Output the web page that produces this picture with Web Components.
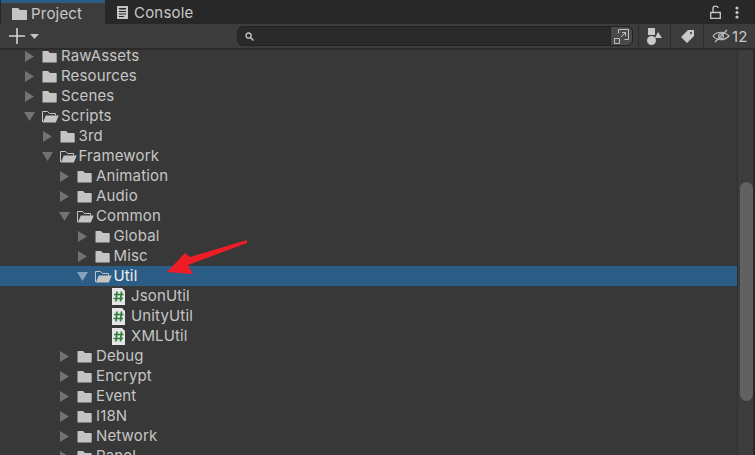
<!DOCTYPE html>
<html>
<head>
<meta charset="utf-8">
<style>
  html, body { margin: 0; padding: 0; background: #383838; }
  body { width: 755px; height: 455px; overflow: hidden; font-family: Inter, "Noto Sans", sans-serif; }
</style>
</head>
<body>
<project-window>
  <tab-bar slot="tabs"></tab-bar>
  <tool-bar slot="tools"></tool-bar>
  <tree-view slot="tree">
    <tree-row depth="0" state="closed">RawAssets</tree-row>
    <tree-row depth="0" state="closed">Resources</tree-row>
    <tree-row depth="0" state="closed">Scenes</tree-row>
    <tree-row depth="0" state="open">Scripts</tree-row>
    <tree-row depth="1" state="closed">3rd</tree-row>
    <tree-row depth="1" state="open">Framework</tree-row>
    <tree-row depth="2" state="closed">Animation</tree-row>
    <tree-row depth="2" state="closed">Audio</tree-row>
    <tree-row depth="2" state="open">Common</tree-row>
    <tree-row depth="3" state="closed">Global</tree-row>
    <tree-row depth="3" state="closed">Misc</tree-row>
    <tree-row depth="3" state="open" selected>Util</tree-row>
    <tree-row depth="4" state="file">JsonUtil</tree-row>
    <tree-row depth="4" state="file">UnityUtil</tree-row>
    <tree-row depth="4" state="file">XMLUtil</tree-row>
    <tree-row depth="2" state="closed">Debug</tree-row>
    <tree-row depth="2" state="closed">Encrypt</tree-row>
    <tree-row depth="2" state="closed">Event</tree-row>
    <tree-row depth="2" state="closed">I18N</tree-row>
    <tree-row depth="2" state="closed">Network</tree-row>
    <tree-row depth="2" state="closed">Panel</tree-row>
  </tree-view>
  <scroll-bar slot="scroll"></scroll-bar>
  <red-arrow slot="overlay"></red-arrow>
</project-window>

<script>
class ProjectWindow extends HTMLElement {
  constructor() {
    super();
    this.attachShadow({ mode: "open" });
    this.shadowRoot.innerHTML = `
      <style>
        :host { display: flex; flex-direction: column; width: 755px; height: 455px; position: relative; overflow: hidden; }
        .body { flex: 1; display: flex; min-height: 0; }
      </style>
      <slot name="tabs"></slot>
      <slot name="tools"></slot>
      <div class="body">
        <slot name="tree"></slot>
        <slot name="scroll"></slot>
      </div>
      <slot name="overlay"></slot>
    `;
  }
}
customElements.define("project-window", ProjectWindow);

class TabBar extends HTMLElement {
  constructor() {
    super();
    this.attachShadow({ mode: "open" });
    this.shadowRoot.innerHTML = `
      <style>
        :host { display: flex; height: 24px; background: #282828; color: #c8c8c8; font-size: 15px; letter-spacing: .2px; flex: none; }
        .tab { display: flex; align-items: center; box-sizing: border-box; height: 24px; }
        .active { width: 104px; padding: 0 0 1px 11px; gap: 4px; background: #3c3c3c; border-top: 3px solid #2c5d87; margin-left: 1px; }
        .other { padding: 1px 0 0 11px; gap: 5px; }
        .right { margin-left: auto; display: flex; align-items: center; gap: 14px; padding-right: 16px; height: 24px; }
        svg { display: block; }
      </style>
      <div class="tab active">
        <svg width="15" height="13" viewBox="0 0 15 13"><path d="M0 1h6l2 2h7v10H0z" fill="#c4c4c4"/></svg>
        <span>Project</span>
      </div>
      <div class="tab other">
        <svg width="13" height="13" viewBox="0 0 13 13"><path fill="#c4c4c4" fill-rule="evenodd" d="M1 0h11v13H1zM3 2v1.500h7V2zM3 5v1h7V5zM3 7.500v1h7v-1zM3 10v1h5v-1z"/></svg>
        <span>Console</span>
      </div>
      <div class="right">
        <svg width="11" height="14" viewBox="0 0 11 14"><path fill="none" stroke="#c8c8c8" stroke-width="1.3" d="M.7 7.500h9.600v5.800H.7zM3 7.300V3.200C3 .4 8 .4 8 3"/></svg>
        <svg width="4" height="13" viewBox="0 0 4 13"><g fill="#c8c8c8"><circle cx="2" cy="2" r="1.6"/><circle cx="2" cy="6.500" r="1.6"/><circle cx="2" cy="11" r="1.6"/></g></svg>
      </div>
    `;
  }
}
customElements.define("tab-bar", TabBar);

class ToolBar extends HTMLElement {
  constructor() {
    super();
    this.attachShadow({ mode: "open" });
    this.shadowRoot.innerHTML = `
      <style>
        :host { display: flex; align-items: center; box-sizing: border-box; height: 26px; flex: none; background: #3c3c3c; border-bottom: 2px solid #2b2b2b; color: #c8c8c8; font-size: 15px; }
        .add { display: flex; align-items: center; gap: 5px; padding-left: 9px; width: 237px; box-sizing: border-box; }
        .search { width: 396px; height: 20px; box-sizing: border-box; background: #2a2a2a; border: 1px solid #212121; border-radius: 6px; display: flex; align-items: center; justify-content: space-between; padding-left: 7px; overflow: hidden; }
        .expand { width: 21px; height: 18px; background: #4a4a4a; display: flex; align-items: center; justify-content: center; border-left: 1px solid #222; }
        .btn { height: 24px; display: flex; align-items: center; justify-content: center; border-left: 1px solid #2c2c2c; box-sizing: border-box; }
        .b1 { margin-left: 5px; width: 32px; }
        .b2 { width: 33px; }
        .b3 { width: 52px; justify-content: flex-start; padding-left: 8px; gap: 2px; letter-spacing: .2px; }
        svg { display: block; }
      </style>
      <div class="add">
        <svg width="16" height="16" viewBox="0 0 16 16"><path d="M8 0v16M0 8h16" stroke="#d2d2d2" stroke-width="1.6"/></svg>
        <svg width="9" height="5" viewBox="0 0 9 5"><path d="M0 0h9L4.500 5z" fill="#c4c4c4"/></svg>
      </div>
      <div class="search">
        <svg width="9" height="9" viewBox="0 0 9 9"><circle cx="3.6" cy="3.6" r="2.6" fill="none" stroke="#c8c8c8" stroke-width="1.3"/><path d="M5.500 5.500 8.500 8.500" stroke="#c8c8c8" stroke-width="1.5"/></svg>
        <div class="expand">
          <svg width="15" height="15" viewBox="0 0 15 15"><g fill="none" stroke="#c0c0c0"><path d="M4.500 4.500V.5h10v10h-4"/><path d="M.5 9.500h5v5h-5z"/><path d="M7 8l4.500-4.500M8 3.500h3.500V7"/></g></svg>
        </div>
      </div>
      <div class="btn b1">
        <svg width="15" height="17" viewBox="0 0 15 17"><g fill="#c8c8c8"><rect x="1" y="0" width="7" height="7"/><circle cx="4.500" cy="12.500" r="4.500"/><path d="M11 4l4 6H8z"/></g></svg>
      </div>
      <div class="btn b2">
        <svg width="13" height="13" viewBox="0 0 13 13"><path fill="#c8c8c8" fill-rule="evenodd" d="M7 0h6v6l-7 7-6-6zM10 2a1 1 0 1 0 .01 0z"/></svg>
      </div>
      <div class="btn b3">
        <svg width="18" height="14" viewBox="0 0 18 14"><g fill="none" stroke="#c0c0c0" stroke-width="1.2"><path d="M1 7c4-5 11-5 16 0-5 5-12 5-16 0z"/><circle cx="9" cy="7" r="2.4"/><path d="M3 13 15 1"/></g></svg>
        <span>12</span>
      </div>
    `;
  }
}
customElements.define("tool-bar", ToolBar);

class TreeView extends HTMLElement {
  constructor() {
    super();
    this.attachShadow({ mode: "open" });
    // the first row starts a little under the toolbar, as if scrolled
    this.shadowRoot.innerHTML = `
      <style>
        :host { display: block; width: 737px; height: 405px; background: #383838; }
        .list { margin-top: -4px; }
      </style>
      <div class="list"><slot></slot></div>
    `;
  }
}
customElements.define("tree-view", TreeView);

const FOLDER = `<svg width="15" height="13" viewBox="0 0 15 13"><path d="M.5 1.500Q.5 1 1 1h5l2 2h6q.7 0 .7.7V12q0 .6-.7.6H1q-.5 0-.5-.6z" fill="#c4c4c4"/></svg>`;
const FOLDER_OPEN = `<svg width="17" height="13" viewBox="0 0 17 13"><path d="M.5 12V1.500h5l2 2h6V5.500" fill="none" stroke="#c4c4c4" stroke-width="1"/><path d="M.8 12.600 3.800 5.500H16.800L13.800 12.600z" fill="#c4c4c4"/></svg>`;
const SCRIPT = `<svg width="13" height="17" viewBox="0 0 13 17"><path d="M0 0h10l3 3v14H0z" fill="#e6e6e6"/><path d="M5 3.500 4 13.500M9.500 3.500 8.500 13.500M2 6.500h9.500M1.500 10.500h9.500" stroke="#2e7d3c" stroke-width="1.700" fill="none"/></svg>`;

class TreeRow extends HTMLElement {
  constructor() {
    super();
    this.attachShadow({ mode: "open" });
    const depth = Number(this.getAttribute("depth"));
    const state = this.getAttribute("state");
    const selected = this.hasAttribute("selected");
    const arrowCol = selected ? "#86a2bb" : "#727272";
    let arrow = "";
    if (state === "closed") arrow = `<svg width="9" height="11" viewBox="0 0 9 11"><path d="M0 0 9 5.500 0 11z" fill="${arrowCol}"/></svg>`;
    if (state === "open") arrow = `<svg width="11" height="9" viewBox="0 0 11 9"><path d="M0 0H11L5.500 9z" fill="${arrowCol}"/></svg>`;
    const icon = state === "closed" ? FOLDER : state === "open" ? FOLDER_OPEN : SCRIPT;
    const iconW = state === "open" ? 17 : state === "file" ? 13 : 15;
    const iconGap = state === "open" ? 2 : state === "file" ? 6 : 4;
    this.shadowRoot.innerHTML = `
      <style>
        :host { display: flex; align-items: center; height: 20px; font-size: 15px; line-height: 14px; letter-spacing: .15px; color: #c6c6c6; box-sizing: border-box; padding-left: ${24 + depth * 17.5}px; ${selected ? "background: #2c5d87; color: #f0f0f0;" : ""} }
        .arrow { width: 18px; display: flex; align-items: center; flex: none; padding-left: ${state === "closed" ? 1 : 0}px; box-sizing: border-box; }
        .icon { width: ${iconW}px; margin-right: ${iconGap}px; flex: none; display: flex; }
        svg { display: block; }
      </style>
      <span class="arrow">${arrow}</span>
      <span class="icon">${icon}</span>
      <span class="label"><slot></slot></span>
    `;
  }
}
customElements.define("tree-row", TreeRow);

class ScrollBar extends HTMLElement {
  constructor() {
    super();
    this.attachShadow({ mode: "open" });
    this.shadowRoot.innerHTML = `
      <style>
        :host { display: block; box-sizing: border-box; width: 18px; height: 405px; background: #3d3d3d; border-left: 1px solid #2f2f2f; border-right: 2px solid #2a2a2a; padding: 132px 0 0 2px; }
        .thumb { width: 13px; height: 219px; background: #616161; border-radius: 7px; }
      </style>
      <div class="thumb"></div>
    `;
  }
}
customElements.define("scroll-bar", ScrollBar);

class RedArrow extends HTMLElement {
  constructor() {
    super();
    this.attachShadow({ mode: "open" });
    this.shadowRoot.innerHTML = `
      <style>
        :host { display: block; position: absolute; left: 160px; top: 235px; width: 95px; height: 45px; }
        svg { display: block; }
      </style>
      <svg width="95" height="45" viewBox="160 235 95 45"><path d="M247 240 190 257 185 253 167 272 193 274 188 265 247 243z" fill="#ee1c25"/></svg>
    `;
  }
}
customElements.define("red-arrow", RedArrow);
</script>
</body>
</html>
